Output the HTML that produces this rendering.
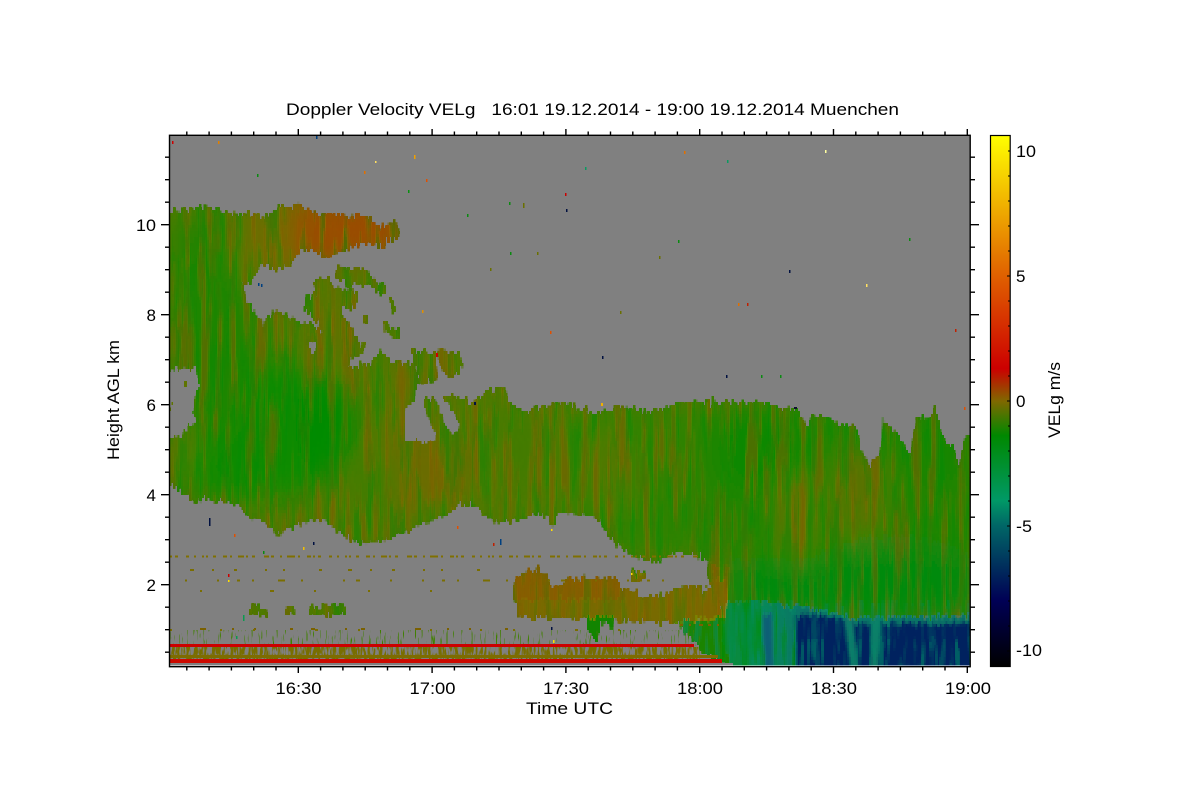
<!DOCTYPE html>
<html><head><meta charset="utf-8"><title>Doppler Velocity VELg</title>
<style>
html,body{margin:0;padding:0;background:#fff}
svg{display:block}
text{font-family:"Liberation Sans",Arial,sans-serif;font-size:17px;fill:#000}
</style></head><body>
<svg width="1200" height="800" viewBox="0 0 1200 800" xmlns="http://www.w3.org/2000/svg">
<defs>
<linearGradient id="cb" x1="0" y1="0" x2="0" y2="1">
<stop offset="0" stop-color="#ffff00"/><stop offset=".265" stop-color="#e06000"/><stop offset=".439" stop-color="#cc0000"/><stop offset=".5" stop-color="#806800"/><stop offset=".565" stop-color="#008800"/><stop offset=".687" stop-color="#009966"/><stop offset=".735" stop-color="#006666"/><stop offset=".876" stop-color="#000055"/><stop offset="1" stop-color="#000000"/>
</linearGradient>
<linearGradient id="tl" x1="727" x2="800" y1="0" y2="0" gradientUnits="userSpaceOnUse"><stop offset="0" stop-color="#0a8a34"/><stop offset=".45" stop-color="#068a58"/><stop offset="1" stop-color="#0a7466"/></linearGradient>
<clipPath id="plot"><rect x="170" y="136" width="800" height="530"/></clipPath>
<clipPath id="cBrown"><rect x="510" y="565" width="220" height="58"/></clipPath>
<clipPath id="cGreenDrop"><rect x="682" y="620" width="50" height="50"/></clipPath>
<clipPath id="cTeal"><rect x="727" y="602" width="248" height="73"/></clipPath>
<clipPath id="cTealL"><rect x="722" y="602" width="74" height="73"/></clipPath>
<clipPath id="cNavyLow"><rect x="790" y="640" width="185" height="35"/></clipPath>
<clipPath id="cSr"><rect x="170" y="630" width="530" height="16"/></clipPath>
<clipPath id="cSo"><rect x="170" y="647" width="530" height="12"/></clipPath>
<filter id="bl" filterUnits="userSpaceOnUse" x="100" y="100" width="950" height="620"><feGaussianBlur stdDeviation="13"/></filter>
<filter id="bl2" filterUnits="userSpaceOnUse" x="100" y="100" width="950" height="620"><feGaussianBlur stdDeviation="1.5"/></filter>
<filter id="sb" filterUnits="userSpaceOnUse" x="169" y="135" width="806" height="540" color-interpolation-filters="sRGB"><feTurbulence type="fractalNoise" baseFrequency="0.14 0.01" numOctaves="3" seed="3"/><feColorMatrix values="0 0 0 0 .58  0 0 0 0 .33  0 0 0 0 0  4.5 0 0 0 -2.1"/></filter>
<filter id="sg" filterUnits="userSpaceOnUse" x="169" y="135" width="806" height="540" color-interpolation-filters="sRGB"><feTurbulence type="fractalNoise" baseFrequency="0.12 0.012" numOctaves="3" seed="11"/><feColorMatrix values="0 0 0 0 0  0 0 0 0 .55  0 0 0 0 .02  4.5 0 0 0 -2.1"/></filter>
<filter id="st" filterUnits="userSpaceOnUse" x="169" y="135" width="806" height="540" color-interpolation-filters="sRGB"><feTurbulence type="fractalNoise" baseFrequency="0.2 0.015" numOctaves="3" seed="21"/><feColorMatrix values="0 0 0 0 0  0 0 0 0 .55  0 0 0 0 .42  5 0 0 0 -2.5"/></filter>
<filter id="so" filterUnits="userSpaceOnUse" x="169" y="135" width="806" height="540" color-interpolation-filters="sRGB"><feTurbulence type="fractalNoise" baseFrequency="0.45 0.09" numOctaves="2" seed="5"/><feColorMatrix values="0 0 0 0 .47  0 0 0 0 .43  0 0 0 0 0  7 0 0 0 -2.9"/></filter>
<filter id="sr" filterUnits="userSpaceOnUse" x="169" y="135" width="806" height="540" color-interpolation-filters="sRGB"><feTurbulence type="fractalNoise" baseFrequency="0.6 0.06" numOctaves="2" seed="9"/><feColorMatrix values="0 0 0 0 .25  0 0 0 0 .5  0 0 0 0 0  12 0 0 0 -7.6"/></filter>
<filter id="pix" filterUnits="userSpaceOnUse" x="169" y="135" width="806" height="540" color-interpolation-filters="sRGB">
<feTurbulence type="fractalNoise" baseFrequency="0.4 0.07" numOctaves="3" seed="7" result="n"/>
<feColorMatrix in="n" values="0 0 0 0 .5  1 0 0 0 0  0 0 0 0 0  0 0 0 0 1" result="m"/>
<feDisplacementMap in="SourceGraphic" in2="m" scale="16" xChannelSelector="R" yChannelSelector="G" result="d"/>
<feFlood x="170" y="136" width="1" height="1" flood-color="#000"/>
<feComposite x="169" y="135" width="2" height="3"/>
<feTile x="169" y="135" width="806" height="540" result="a"/>
<feComposite in="d" in2="a" operator="in"/>
<feMorphology operator="dilate" radius="1 1"/>
</filter>
<clipPath id="cl">
<polygon points="170,213 215,207 225,213 240,215 270,216 275,209 296,205 320,215 340,215 370,217 378,228 395,223 400,235 392,241 385,238 385,247 365,242 345,250 325,258 315,250 300,250 292,263 275,270 268,263 255,272 250,283 242,283 245,300 255,315 262,320 263,337 265,323 272,315 280,312 290,318 300,323 312,326 323,333 320,323 308,312 303,307 307,298 317,293 313,280 330,280 334,290 345,288 358,295 357,303 352,307 340,307 343,315 350,328 360,343 367,342 362,352 352,357 347,363 350,368 370,365 378,353 385,355 392,362 405,363 413,363 417,372 420,385 420,400 440,400 448,395 473,403 490,390 503,387 510,403 523,412 547,407 563,402 593,415 620,407 650,413 660,410 680,403 703,402 740,403 763,403 790,410 800,413 808,428 813,415 827,418 840,425 857,427 860,450 870,467 882,450 883,418 890,427 903,443 910,457 917,417 930,420 935,408 943,440 953,450 960,468 965,437 975,435 975,675 733,675 722,620 722,603 713,590 707,572 710,560 703,558 693,552 673,553 653,560 647,560 627,552 617,543 607,533 600,522 587,515 567,513 557,513 553,528 548,515 540,513 520,518 500,522 485,515 475,507 458,503 448,515 432,520 423,522 405,532 392,538 360,543 338,532 328,522 312,520 295,525 278,533 265,522 252,518 238,507 232,502 218,502 205,497 195,503 185,493 170,483"/>
<polygon points="335,270 345,268 365,270 372,278 380,285 375,287 355,283 350,288 340,278 336,275"/>
<polygon points="375,283 385,285 385,292 375,292"/>
<polygon points="389,298 393,298 396,310 392,310"/>
<polygon points="363,315 367,315 367,323 363,323"/>
<polygon points="383,322 390,328 400,330 400,338 393,338 385,330"/>
<polygon points="412,349 420,352 425,352 435,355 437,375 430,383 422,385 418,370 412,355"/>
<polygon points="438,350 450,355 458,352 463,363 462,368 455,375 448,378 443,372 438,355"/>
<polygon points="515,580 527,573 538,570 548,578 550,588 560,588 563,582 580,578 600,580 617,578 620,590 637,592 638,597 660,597 680,588 697,587 713,590 720,603 727,617 733,666 723,662 700,650 695,640 683,630 680,623 670,622 613,620 612,632 610,622 600,625 597,640 590,635 587,619 560,618 518,615 517,603 513,598"/>
<polygon points="632,572 645,572 645,580 632,580"/>
<polygon points="250,607 265,605 268,614 250,614"/>
<polygon points="285,607 294,606 295,613 285,613"/>
<polygon points="310,608 330,608 333,604 345,605 345,614 310,614"/>
</clipPath>
</defs>
<rect width="1200" height="800" fill="#fff"/>
<rect x="170" y="136" width="800" height="530" fill="#808080"/>
<g clip-path="url(#plot)">
<g filter="url(#pix)">
<g clip-path="url(#cl)">
<rect x="169" y="135" width="806" height="540" fill="#4e7900"/>
<g filter="url(#bl)">
<rect x="170" y="215" width="85" height="290" fill="#2c8000"/>
<ellipse cx="260" cy="430" rx="85" ry="72" fill="#0a8b00"/>
<ellipse cx="325" cy="425" rx="30" ry="50" fill="#068b00"/>
<ellipse cx="210" cy="340" rx="38" ry="110" fill="#1a8500"/>
<polygon points="285,200 405,200 405,255 335,262 285,270" fill="#9a4c00"/>
<rect x="240" y="205" width="55" height="70" fill="#6e6c00"/>
<ellipse cx="340" cy="325" rx="28" ry="35" fill="#5f7200"/>
<ellipse cx="178" cy="445" rx="14" ry="28" fill="#647000"/>
<ellipse cx="415" cy="375" rx="16" ry="22" fill="#7a6400"/>
<ellipse cx="410" cy="470" rx="32" ry="50" fill="#6a6c00"/>
<ellipse cx="378" cy="490" rx="18" ry="40" fill="#3b7e00"/>
<ellipse cx="450" cy="470" rx="22" ry="35" fill="#6a6c00"/>
<ellipse cx="520" cy="450" rx="18" ry="50" fill="#3f7c00"/>
<rect x="570" y="410" width="130" height="145" fill="#2e8200"/>
<ellipse cx="610" cy="470" rx="14" ry="45" fill="#5c7400"/>
<rect x="700" y="405" width="275" height="150" fill="#248400"/>
<ellipse cx="760" cy="450" rx="45" ry="45" fill="#108800"/>
<ellipse cx="795" cy="520" rx="14" ry="45" fill="#6a6a00"/>
<ellipse cx="860" cy="490" rx="24" ry="50" fill="#5a7200"/>
<ellipse cx="895" cy="575" rx="85" ry="30" fill="#008a14"/>
<ellipse cx="945" cy="460" rx="25" ry="30" fill="#128500"/>
<rect x="730" y="560" width="240" height="60" fill="#008a10"/>
</g>
<rect x="169" y="135" width="806" height="540" filter="url(#sb)" opacity=".45"/>
<rect x="169" y="135" width="806" height="540" filter="url(#sg)" opacity=".45"/>
<polygon points="510,565 725,580 730,622 510,622" fill="#786a00"/>
<polygon points="510,565 625,565 625,600 510,600" fill="#855e00"/>
<g clip-path="url(#cBrown)"><rect x="169" y="135" width="806" height="540" filter="url(#sb)" opacity=".45"/><rect x="169" y="135" width="806" height="540" filter="url(#sg)" opacity=".25"/></g>
<polygon points="587,617 613,617 613,645 587,645" fill="#128400"/>
<polygon points="682,621 730,616 738,670 700,670" fill="#1a8400"/>
<g clip-path="url(#cGreenDrop)"><rect x="169" y="135" width="806" height="540" filter="url(#st)" opacity=".5"/></g>
<polygon points="727,602 767,602 807,608 833,613 857,618 975,617 975,675 735,675 722,640" fill="url(#tl)"/>
<g filter="url(#bl2)">
<polygon points="795,615 815,614 833,618 857,623 975,623 975,675 795,675" fill="#03245f"/>
<polygon points="762,615 772,612 774,675 764,675" fill="#0a5f74"/>
<polygon points="845,620 852,620 858,672 852,672" fill="#0a7a6a"/>
<polygon points="872,620 880,620 877,672 872,672" fill="#0a8068"/>
</g>
<g clip-path="url(#cTealL)"><rect x="169" y="135" width="806" height="540" filter="url(#sg)" opacity=".7"/></g>
<g clip-path="url(#cTeal)"><rect x="169" y="135" width="806" height="540" filter="url(#st)" opacity=".35"/></g>
<g clip-path="url(#cNavyLow)"><rect x="169" y="135" width="806" height="540" filter="url(#st)" opacity=".35"/></g>
</g>
<polygon points="170,372 178,370 195,368 199,385 194,400 192,412 196,420 186,427 181,434 170,436" fill="#808080"/>
<polygon points="405,408 415,405 418,385 423,385 423,407 426,415 431,427 436,435 433,441 405,441" fill="#808080"/>
<polygon points="435,396 441,396 459,425 457,430 449,430" fill="#808080"/>
<polygon points="310,344 316,342 316,351 310,351" fill="#808080"/>
<rect x="170" y="402" width="3" height="6" fill="#5e7400"/>
<rect x="183" y="381" width="5" height="7" fill="#5e7400"/>
</g>
</g>
<!-- ceilometer band -->
<g shape-rendering="crispEdges">
<g clip-path="url(#cSr)"><rect x="169" y="135" width="806" height="540" filter="url(#sr)"/></g>
<g clip-path="url(#cSo)"><rect x="169" y="135" width="806" height="540" filter="url(#so)"/></g>
<rect x="170" y="655" width="548" height="3" fill="#7d6c00"/>
<rect x="170" y="644" width="524" height="3" fill="#cc0000"/>
<rect x="170" y="659" width="552" height="4" fill="#cc0a00"/>
<rect x="170" y="663" width="563" height="2.5" fill="#808080"/>
<rect x="170" y="665.5" width="800" height="1.5" fill="#fff"/>
<line x1="170" y1="556.5" x2="700" y2="556.5" stroke="#7f7000" stroke-width="2" stroke-dasharray="2 3 3 8 3 5 2 6 2 2 2 5 3 7 4 3 2 6 6 2 2 4 3 9 5 2 3 6 2 5 8 3 2 7 4 2"/>
<line x1="190" y1="570" x2="500" y2="570" stroke="#7a6e00" stroke-width="2" stroke-dasharray="4 18 2 20 3 28 2 16 2 34 3 26"/>
<line x1="185" y1="580.5" x2="680" y2="580.5" stroke="#7a6e00" stroke-width="2" stroke-dasharray="2 30 2 18 3 12 2 24 7 16 2 40 2 11 4 30"/>
<line x1="200" y1="591" x2="480" y2="591" stroke="#7a6e00" stroke-width="2" stroke-dasharray="2 68 4 40 2 52 2 60"/>
<line x1="200" y1="629" x2="520" y2="629" stroke="#7a6000" stroke-width="2" stroke-dasharray="6 26 2 20 2 34 3 18 4 30 2 14 4 50"/>
<line x1="680" y1="625" x2="720" y2="625" stroke="#7a6000" stroke-width="2" stroke-dasharray="3 6 2 8 4 5"/>
<line x1="170" y1="630" x2="660" y2="630" stroke="#7a6e00" stroke-width="2" stroke-dasharray="2 48 2 31 2 60 3 40 2 70"/>
</g>
<!-- specks -->
<g shape-rendering="crispEdges">
<rect x="172" y="141" width="1.5" height="3" fill="#c00"/><rect x="218" y="141" width="1.5" height="3" fill="#e08000"/><rect x="316" y="135" width="1.5" height="4" fill="#004080"/><rect x="257" y="174" width="1.5" height="3" fill="#0a8a10"/><rect x="364" y="171" width="1.5" height="3" fill="#e07000"/><rect x="375" y="161" width="1.5" height="2" fill="#ffe060"/><rect x="414" y="155" width="1.5" height="4" fill="#f0a000"/><rect x="426" y="179" width="1.5" height="3" fill="#e05000"/><rect x="408" y="190" width="1.5" height="3" fill="#0a9010"/>
<rect x="565" y="193" width="1.5" height="3" fill="#c00"/><rect x="566" y="209" width="1.5" height="3" fill="#001040"/><rect x="509" y="202" width="1.5" height="3" fill="#0a8a10"/><rect x="523" y="203" width="1.5" height="5" fill="#6a7000"/><rect x="467" y="214" width="1.5" height="3" fill="#0a8a10"/><rect x="585" y="167" width="1.5" height="3" fill="#0a9a60"/><rect x="684" y="151" width="1.5" height="3" fill="#e07000"/><rect x="825" y="150" width="1.5" height="3" fill="#ffffa0"/><rect x="727" y="160" width="1.5" height="3" fill="#0a9a60"/><rect x="789" y="270" width="1.5" height="3" fill="#001040"/><rect x="866" y="284" width="1.5" height="3" fill="#ffe060"/><rect x="909" y="238" width="1.5" height="3" fill="#0a8a10"/><rect x="738" y="303" width="1.5" height="3" fill="#e07000"/><rect x="747" y="303" width="1.5" height="3" fill="#c02000"/><rect x="955" y="329" width="1.5" height="3" fill="#c02000"/><rect x="602" y="356" width="1.5" height="3" fill="#001040"/><rect x="726" y="375" width="1.5" height="3" fill="#001040"/><rect x="620" y="311" width="1.5" height="3" fill="#6a7000"/><rect x="550" y="331" width="1.5" height="3" fill="#e05000"/><rect x="761" y="375" width="1.5" height="3" fill="#0a8a10"/><rect x="780" y="375" width="1.5" height="3" fill="#0a8a10"/><rect x="794" y="407" width="3" height="2" fill="#101030"/><rect x="964" y="407" width="1.5" height="3" fill="#e05000"/><rect x="678" y="240" width="1.5" height="3" fill="#0a8a10"/><rect x="659" y="256" width="1.5" height="3" fill="#6a7000"/><rect x="490" y="268" width="1.5" height="3" fill="#6a7000"/><rect x="510" y="252" width="1.5" height="3" fill="#0a8a10"/><rect x="537" y="252" width="1.5" height="3" fill="#6a7000"/><rect x="258" y="283" width="1.5" height="3" fill="#004080"/><rect x="261" y="284" width="1.5" height="3" fill="#004080"/><rect x="422" y="310" width="1.5" height="3" fill="#e09000"/><rect x="436" y="353" width="2" height="4" fill="#c00"/><rect x="474" y="402" width="2" height="3" fill="#001040"/><rect x="601" y="403" width="2" height="3" fill="#f0b000"/>
<rect x="209" y="518" width="1.5" height="8" fill="#001040"/><rect x="234" y="534" width="1.5" height="3" fill="#e05000"/><rect x="303" y="547" width="1.5" height="3" fill="#f0c000"/><rect x="313" y="542" width="1.5" height="3" fill="#001040"/><rect x="263" y="551" width="1.5" height="3" fill="#0a8a10"/><rect x="228" y="574" width="1.5" height="3" fill="#c00"/><rect x="228" y="580" width="1.5" height="2" fill="#ffe000"/><rect x="457" y="526" width="1.5" height="3" fill="#e05000"/><rect x="493" y="543" width="1.5" height="3" fill="#c02000"/><rect x="500" y="539" width="1.5" height="6" fill="#004080"/><rect x="551" y="529" width="1.5" height="2" fill="#ffe000"/><rect x="631" y="573" width="1.5" height="2" fill="#ffe000"/><rect x="553" y="640" width="1.5" height="3" fill="#ffe000"/><rect x="551" y="627" width="1.5" height="3" fill="#001040"/><rect x="243" y="615" width="1.5" height="6" fill="#0a9a50"/><rect x="236" y="636" width="1.5" height="3" fill="#0a9a50"/>
</g>
<!-- frame & ticks -->
<g fill="none" stroke="#000" stroke-width="1.4">
<rect x="169.5" y="135.3" width="800.7" height="531.4"/>
<path d="M186.8 135V131.5M209.1 135V131.5M231.4 135V131.5M253.7 135V131.5M276 135V131.5M298.3 135V129M320.6 135V131.5M342.9 135V131.5M365.2 135V131.5M387.5 135V131.5M409.8 135V131.5M432.1 135V129M454.4 135V131.5M476.7 135V131.5M499 135V131.5M521.3 135V131.5M543.6 135V131.5M565.9 135V129M588.2 135V131.5M610.5 135V131.5M632.8 135V131.5M655.1 135V131.5M677.4 135V131.5M699.7 135V129M722 135V131.5M744.3 135V131.5M766.6 135V131.5M788.9 135V131.5M811.2 135V131.5M833.5 135V129M855.8 135V131.5M878.1 135V131.5M900.4 135V131.5M922.7 135V131.5M945 135V131.5M967.3 135V129"/>
<path d="M186.8 667V670.5M209.1 667V670.5M231.4 667V670.5M253.7 667V670.5M276 667V670.5M298.3 667V673M320.6 667V670.5M342.9 667V670.5M365.2 667V670.5M387.5 667V670.5M409.8 667V670.5M432.1 667V673M454.4 667V670.5M476.7 667V670.5M499 667V670.5M521.3 667V670.5M543.6 667V670.5M565.9 667V673M588.2 667V670.5M610.5 667V670.5M632.8 667V670.5M655.1 667V670.5M677.4 667V670.5M699.7 667V673M722 667V670.5M744.3 667V670.5M766.6 667V670.5M788.9 667V670.5M811.2 667V670.5M833.5 667V673M855.8 667V670.5M878.1 667V670.5M900.4 667V670.5M922.7 667V670.5M945 667V670.5M967.3 667V673"/>
<path d="M169 157.2H165M169 179.7H165M169 202.2H165M169 224.7H161M169 247.2H165M169 269.7H165M169 292.2H165M169 314.7H161M169 337.2H165M169 359.7H165M169 382.2H165M169 404.7H161M169 427.2H165M169 449.7H165M169 472.2H165M169 494.7H161M169 517.2H165M169 539.7H165M169 562.2H165M169 584.7H161M169 607.2H165M169 629.7H165M169 652.2H165"/>
<path d="M970 157.2H975M970 179.7H975M970 202.2H975M970 224.7H979M970 247.2H975M970 269.7H975M970 292.2H975M970 314.7H979M970 337.2H975M970 359.7H975M970 382.2H975M970 404.7H979M970 427.2H975M970 449.7H975M970 472.2H975M970 494.7H979M970 517.2H975M970 539.7H975M970 562.2H975M970 584.7H979M970 607.2H975M970 629.7H975M970 652.2H975"/>
</g>
<!-- colourbar -->
<rect x="990.5" y="135.5" width="19.7" height="531" fill="url(#cb)" stroke="#000" stroke-width="1.2"/>
<path d="M1010 151H1008M1010 176H1008M1010 201H1008M1010 226H1008M1010 251H1008M1010 276H1007M1010 301H1008M1010 326H1008M1010 351H1008M1010 376H1008M1010 401H1007M1010 426H1008M1010 451H1008M1010 476H1008M1010 501H1008M1010 526H1007M1010 551H1008M1010 576H1008M1010 601H1008M1010 626H1008M1010 651H1007" fill="none" stroke="#000" stroke-width="1"/>
<!-- text -->
<text x="286" y="115" xml:space="preserve" textLength="613" lengthAdjust="spacingAndGlyphs">Doppler Velocity VELg   16:01 19.12.2014 - 19:00 19.12.2014 Muenchen</text>
<text x="275.5" y="694" textLength="46" lengthAdjust="spacingAndGlyphs">16:30</text>
<text x="409.5" y="694" textLength="46" lengthAdjust="spacingAndGlyphs">17:00</text>
<text x="543" y="694" textLength="46" lengthAdjust="spacingAndGlyphs">17:30</text>
<text x="677" y="694" textLength="46" lengthAdjust="spacingAndGlyphs">18:00</text>
<text x="811" y="694" textLength="46" lengthAdjust="spacingAndGlyphs">18:30</text>
<text x="945" y="694" textLength="46" lengthAdjust="spacingAndGlyphs">19:00</text>
<text x="526" y="714" textLength="87" lengthAdjust="spacingAndGlyphs">Time UTC</text>
<text x="136" y="231" textLength="20" lengthAdjust="spacingAndGlyphs">10</text>
<text x="146.5" y="321">8</text>
<text x="146.5" y="411">6</text>
<text x="146.5" y="501">4</text>
<text x="146.5" y="591">2</text>
<text transform="translate(119,460) rotate(-90)" textLength="120" lengthAdjust="spacingAndGlyphs">Height AGL km</text>
<text x="1016" y="157" textLength="20" lengthAdjust="spacingAndGlyphs">10</text>
<text x="1016" y="282">5</text>
<text x="1016" y="407">0</text>
<text x="1016" y="532" textLength="16" lengthAdjust="spacingAndGlyphs">-5</text>
<text x="1016" y="656" textLength="26" lengthAdjust="spacingAndGlyphs">-10</text>
<text transform="translate(1060,438) rotate(-90)" textLength="76" lengthAdjust="spacingAndGlyphs">VELg m/s</text>
</svg>
</body></html>
